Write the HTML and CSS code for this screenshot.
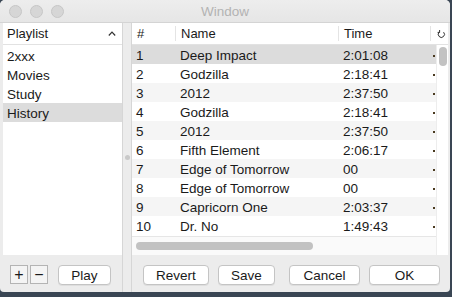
FILE: index.html
```html
<!DOCTYPE html>
<html lang="en">

<head>
    <meta charset="UTF-8">
    <title>Window</title>
    <link rel="stylesheet" href="styles.css">
</head>

<body>
    <div class="window">
        <div class="titlebar">
            <div class="lights">
                <span class="light"></span>
                <span class="light"></span>
                <span class="light"></span>
            </div>
            <div class="title">Window</div>
        </div>
        <div class="panes">
            <div class="side">
                <div class="side-box">
                    <div class="side-head">
                        <span>Playlist</span>
                        <svg class="caret" width="8" height="5" viewBox="0 0 8 5">
                            <path d="M0.8 4.5 L4 1.2 L7.2 4.5" fill="none" stroke="#333" stroke-width="1.2"/>
                        </svg>
                    </div>
                    <div class="side-item">2xxx</div>
                    <div class="side-item">Movies</div>
                    <div class="side-item">Study</div>
                    <div class="side-item selected">History</div>
                </div>
                <div class="bar side-bar">
                    <button class="sq">+</button>
                    <button class="sq">&minus;</button>
                    <button class="btn play">Play</button>
                </div>
            </div>
            <div class="split"><span class="grip"></span></div>
            <div class="main">
                <div class="table">
                    <div class="thead">
                        <div class="th c-num">#</div>
                        <div class="th c-name">Name</div>
                        <div class="th c-time">Time</div>
                        <div class="th c-refresh">
                            <svg width="9" height="10" viewBox="0 0 9 10">
                                <path d="M6.6 3.2 A3.1 3.1 0 1 1 2.3 3" fill="none" stroke="#333" stroke-width="1"/>
                                <path d="M2.6 1 L2.6 3.4 L0.6 3.4" fill="none" stroke="#333" stroke-width="1"/>
                            </svg>
                        </div>
                    </div>
                    <div class="tbody">
                        <div class="rows-wrap">
                            <div class="rows">
                                <div class="row selected"><span class="c-num">1</span><span class="c-name">Deep Impact</span><span class="c-time">2:01:08</span><span class="c-more"></span></div>
                                <div class="row"><span class="c-num">2</span><span class="c-name">Godzilla</span><span class="c-time">2:18:41</span><span class="c-more"></span></div>
                                <div class="row alt"><span class="c-num">3</span><span class="c-name">2012</span><span class="c-time">2:37:50</span><span class="c-more"></span></div>
                                <div class="row"><span class="c-num">4</span><span class="c-name">Godzilla</span><span class="c-time">2:18:41</span><span class="c-more"></span></div>
                                <div class="row alt"><span class="c-num">5</span><span class="c-name">2012</span><span class="c-time">2:37:50</span><span class="c-more"></span></div>
                                <div class="row"><span class="c-num">6</span><span class="c-name">Fifth Element</span><span class="c-time">2:06:17</span><span class="c-more"></span></div>
                                <div class="row alt"><span class="c-num">7</span><span class="c-name">Edge of Tomorrow</span><span class="c-time">00</span><span class="c-more"></span></div>
                                <div class="row"><span class="c-num">8</span><span class="c-name">Edge of Tomorrow</span><span class="c-time">00</span><span class="c-more"></span></div>
                                <div class="row alt"><span class="c-num">9</span><span class="c-name">Capricorn One</span><span class="c-time">2:03:37</span><span class="c-more"></span></div>
                                <div class="row"><span class="c-num">10</span><span class="c-name">Dr. No</span><span class="c-time">1:49:43</span><span class="c-more"></span></div>
                            </div>
                            <div class="hscroll"><span class="hthumb"></span></div>
                        </div>
                        <div class="vscroll"><span class="vthumb"></span></div>
                    </div>
                </div>
                <div class="bar main-bar">
                    <button class="btn revert">Revert</button>
                    <button class="btn save">Save</button>
                    <button class="btn cancel">Cancel</button>
                    <button class="btn ok">OK</button>
                </div>
            </div>
        </div>
    </div>
</body>

</html>
```

FILE: styles.css
```css
body {
    margin: 0;
    width: 452px;
    height: 297px;
    overflow: hidden;
    background: #3a4654;
    font-family: "Liberation Sans", Arial, sans-serif;
    font-size: 13.5px;
    color: #1a1a1a;
}

.window {
    width: 450px;
    height: 292px;
    background: #ececec;
    border-radius: 5px 5px 4px 4px;
    display: flex;
    flex-direction: column;
    overflow: hidden;
}

.titlebar {
    height: 22px;
    flex: none;
    display: grid;
    grid-template-columns: 1fr auto 1fr;
    align-items: center;
    background: linear-gradient(#ededed, #e6e6e6);
    border-bottom: 1px solid #d4d4d4;
}

.lights {
    display: flex;
    gap: 8px;
    padding-left: 9px;
}

.light {
    width: 11px;
    height: 11px;
    border-radius: 50%;
    background: #d6d6d6;
    border: 0.5px solid #c6c6c6;
}

.title {
    color: #b3b3b3;
    font-size: 13.5px;
}

.panes {
    flex: 1;
    display: flex;
    min-height: 0;
}

/* sidebar */
.side {
    width: 122px;
    display: flex;
    flex-direction: column;
    border-right: 1px solid #d6d6d6;
}

.side-box {
    height: 232px;
    margin-left: 3px;
    background: #fff;
}

.side-head {
    height: 22px;
    display: flex;
    align-items: center;
    justify-content: space-between;
    padding: 0 6px 0 4px;
    border-bottom: 1px solid #e2e2e2;
    box-sizing: border-box;
    font-size: 13px;
}

.caret {
    margin-top: -1px;
}

.side-item {
    height: 19px;
    line-height: 21px;
    padding-left: 4px;
}

.side-head + .side-item {
    margin-top: 1px;
}

.selected {
    background: #dcdcdc;
}

.split {
    width: 8px;
    display: flex;
    align-items: center;
    justify-content: center;
    border-right: 1px solid #d6d6d6;
}

.grip {
    width: 5px;
    height: 5px;
    border-radius: 50%;
    background: #c9c9c9;
}

/* table */
.main {
    width: 316px;
    display: flex;
    flex-direction: column;
}

.table {
    height: 232px;
    background: #fff;
    display: flex;
    flex-direction: column;
}

.thead {
    height: 22px;
    flex: none;
    display: flex;
    border-bottom: 1px solid #e2e2e2;
    box-sizing: border-box;
}

.th {
    display: flex;
    align-items: center;
    padding-left: 5px;
    box-sizing: border-box;
    font-size: 13px;
    border-right: 1px solid #e4e4e4;
    margin: 3px 0;
}

.th.c-refresh {
    border-right: none;
    padding-left: 6px;
}

.c-num {
    width: 44px;
}

.c-name {
    width: 163px;
}

.c-time {
    width: 92px;
}

.c-refresh {
    width: 16px;
}

.tbody {
    flex: 1;
    display: flex;
}

.rows-wrap {
    width: 304px;
    display: flex;
    flex-direction: column;
}

.rows {
    flex: 1;
}

.row {
    height: 19px;
    line-height: 21px;
    display: flex;
    white-space: nowrap;
}

.row > span {
    padding-left: 4px;
    box-sizing: border-box;
    overflow: hidden;
}

.row.alt {
    background: #f5f5f5;
}

.row.selected {
    background: #dcdcdc;
}

.c-more {
    width: 5px;
    position: relative;
}

.c-more::before {
    content: "";
    position: absolute;
    left: 2px;
    top: 10px;
    width: 2px;
    height: 2px;
    background: #4a3a20;
}

.hscroll {
    height: 19px;
    background: #fafafa;
    border-top: 1px solid #e6e6e6;
    box-sizing: border-box;
    display: flex;
    align-items: center;
    padding-left: 4px;
}

.hthumb {
    width: 177px;
    height: 8px;
    border-radius: 4px;
    background: #c2c2c2;
}

.vscroll {
    width: 12px;
    background: #fff;
    border-left: 1px solid #ededed;
    box-sizing: border-box;
    padding: 2px 0 0 2px;
}

.vthumb {
    display: block;
    width: 8px;
    height: 19px;
    border-radius: 4px;
    background: #c2c2c2;
}

/* bottom bars */
.bar {
    flex: 1;
    display: flex;
    align-items: flex-start;
    padding-top: 10px;
    box-sizing: border-box;
}

.side-bar {
    padding-left: 10px;
}

button {
    font-family: "Liberation Sans", Arial, sans-serif;
    font-size: 13.5px;
    color: #1a1a1a;
    background: #fff;
    border: 1px solid #c4c4c4;
    height: 20px;
    padding: 0;
    margin: 0;
    box-sizing: border-box;
}

.sq {
    width: 18px;
    height: 19px;
    margin-right: 2px;
    border-color: #b4b4b4;
    background: #f4f4f4;
    font-size: 16px;
    line-height: 16px;
}

.btn {
    border-radius: 4px;
    box-shadow: 0 1px 0 rgba(0, 0, 0, 0.06);
}

.play {
    width: 53px;
    margin-left: 8px;
}

.main-bar {
    padding-left: 11px;
}

.revert {
    width: 66px;
}

.save {
    width: 57px;
    margin-left: 9px;
}

.cancel {
    width: 71px;
    margin-left: 14px;
}

.ok {
    width: 71px;
    margin-left: 9px;
}
```
